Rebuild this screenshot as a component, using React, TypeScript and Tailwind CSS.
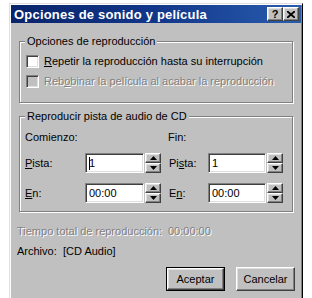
import React from "react";

const raised =
  "border border-t-white border-l-white border-r-[#404040] border-b-[#404040] shadow-[inset_-1px_-1px_0_#808080,inset_1px_1px_0_#dfdfdf] bg-[#c0c0c0]";
const sunken =
  "border border-t-[#808080] border-l-[#808080] border-r-white border-b-white shadow-[inset_1px_1px_0_#404040,inset_-1px_-1px_0_#dfdfdf]";

function U({ c }: { c: string }) {
  return <span className="underline underline-offset-[1px]">{c}</span>;
}

function Spinner() {
  return (
    <div className="flex flex-col w-[16px] h-[20px]">
      <div className={`${raised} h-[10px] flex items-center justify-center`}>
        <svg width="7" height="4" viewBox="0 0 7 4">
          <path d="M3.5 0 L7 4 L0 4 Z" fill="#000" />
        </svg>
      </div>
      <div className={`${raised} h-[10px] flex items-center justify-center`}>
        <svg width="7" height="4" viewBox="0 0 7 4">
          <path d="M0 0 L7 0 L3.5 4 Z" fill="#000" />
        </svg>
      </div>
    </div>
  );
}

function Input({ value, caret }: { value: string; caret?: boolean }) {
  return (
    <div className={`${sunken} bg-white h-[20px] flex items-center pl-[3px] text-black`}>
      {caret && <span className="inline-block w-[1px] h-[13px] bg-black mr-[-1px]" />}
      <span>{value}</span>
    </div>
  );
}

function GroupBox({ label, className, children }: { label: string; className?: string; children: React.ReactNode }) {
  return (
    <div
      className={`relative border border-[#808080] shadow-[inset_1px_1px_0_#fff,1px_1px_0_#fff] ${className ?? ""}`}
    >
      <span className="absolute -top-[8px] left-[5px] bg-[#c0c0c0] px-[2px] leading-[14px]">{label}</span>
      {children}
    </div>
  );
}

export default function App() {
  const disabled = "text-[#808080] [text-shadow:1px_1px_0_#fff]";
  return (
    <div
      className="w-[312px] h-[298px] overflow-hidden bg-white text-[11px] text-black"
      style={{ fontFamily: '"Liberation Sans", Arial, sans-serif' }}
    >
      <div className="ml-[9px] mt-[3px] w-[294px] h-[320px] bg-[#c0c0c0] border border-t-[#dfdfdf] border-l-[#dfdfdf] border-r-[#000] border-b-[#000] shadow-[inset_1px_1px_0_#fff,inset_-1px_-1px_0_#808080] p-[1px]">
        {/* title bar */}
        <div className="h-[18px] bg-gradient-to-r from-[#0a246a] via-[#12378a] to-[#2a5cae] flex items-center pl-[3px] pr-[2px]">
          <span className="text-white font-bold text-[13px] leading-none tracking-[0.2px]">
            Opciones de sonido y película
          </span>
          <div className="ml-auto flex">
            <div className={`${raised} w-[16px] h-[14px] flex items-center justify-center font-bold text-[11px] leading-none`}>
              ?
            </div>
            <div className={`${raised} w-[16px] h-[14px] flex items-center justify-center`}>
              <svg width="8" height="7" viewBox="0 0 8 7">
                <path d="M0 0 L8 7 M8 0 L0 7" stroke="#000" strokeWidth="1.8" />
              </svg>
            </div>
          </div>
        </div>

        <div className="px-[8px]">
          <GroupBox label="Opciones de reproducción" className="mt-[18px] h-[62px] pt-[13px] pl-[6px]">
            <div className="flex flex-col gap-[7px]">
              <div className="flex items-center h-[13px]">
                <div className={`${sunken} bg-white w-[13px] h-[13px]`} />
                <span className="ml-[5px]">
                  <U c="R" />
                  epetir la reproducción hasta su interrupción
                </span>
              </div>
              <div className="flex items-center h-[13px]">
                <div className={`${sunken} bg-[#c0c0c0] w-[13px] h-[13px]`} />
                <span className={`ml-[5px] ${disabled}`}>
                  Reb<U c="o" />binar la película al acabar la reproducción
                </span>
              </div>
            </div>
          </GroupBox>

          <GroupBox label="Reproducir pista de audio de CD" className="mt-[13px] h-[96px] pt-[14px] pl-[5px]">
            <div className="grid grid-cols-[60px_59px_16px_8px_39px_59px_16px] items-center">
              <span className="leading-[13px]">Comienzo:</span>
              <span />
              <span />
              <span />
              <span className="leading-[13px]">Fin:</span>
              <span />
              <span />
            </div>
            <div className="grid grid-cols-[60px_59px_1px_16px_8px_39px_58px_1px_16px] items-center mt-[9px]">
              <span>
                <U c="P" />
                ista:
              </span>
              <Input value="1" caret />
              <span />
              <Spinner />
              <span />
              <span>
                Pi<U c="s" />ta:
              </span>
              <Input value="1" />
              <span />
              <Spinner />
            </div>
            <div className="grid grid-cols-[60px_59px_1px_16px_8px_39px_58px_1px_16px] items-center mt-[10px]">
              <span>
                <U c="E" />
                n:
              </span>
              <Input value="00:00" />
              <span />
              <Spinner />
              <span />
              <span>
                E<U c="n" />:
              </span>
              <Input value="00:00" />
              <span />
              <Spinner />
            </div>
          </GroupBox>
        </div>

        <div className="px-[6px]">
          <div className={`mt-[13px] leading-[13px] flex ${disabled}`}>
            <span className="w-[151px]">Tiempo total de reproducción:</span>
            <span>00:00:00</span>
          </div>
          <div className="mt-[7px] leading-[13px] flex">
            <span className="w-[46px]">Archivo:</span>
            <span>[CD Audio]</span>
          </div>
          <div className="mt-[9px] flex justify-end gap-[11px]">
            <div className="border border-black">
              <div className={`${raised} w-[57px] h-[22px] flex items-center justify-center`}>Aceptar</div>
            </div>
            <div className={`${raised} w-[59px] h-[24px] flex items-center justify-center`}>Cancelar</div>
          </div>
        </div>
      </div>
    </div>
  );
}
